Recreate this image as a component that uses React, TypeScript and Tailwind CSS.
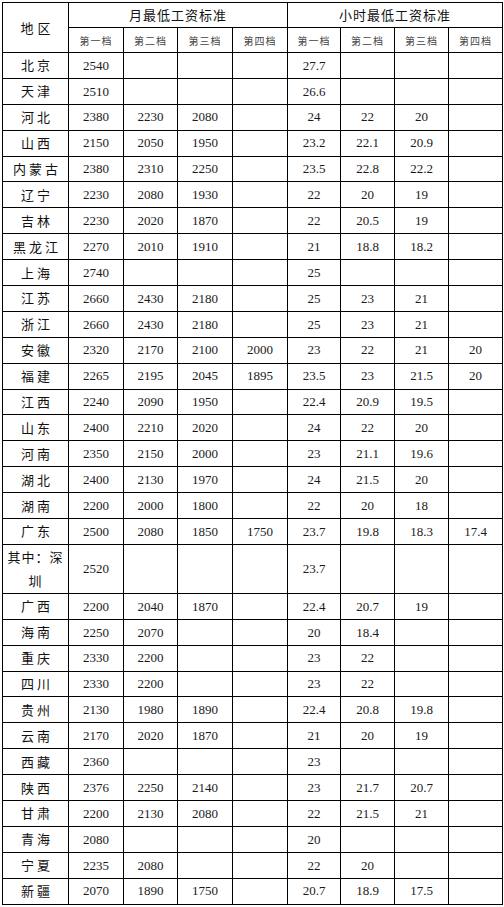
type Row = { name: React.ReactNode; m: string[]; h: string[]; tall?: boolean }

const rows: Row[] = [
  { name: '北京', m: ['2540'], h: ['27.7'] },
  { name: '天津', m: ['2510'], h: ['26.6'] },
  { name: '河北', m: ['2380', '2230', '2080'], h: ['24', '22', '20'] },
  { name: '山西', m: ['2150', '2050', '1950'], h: ['23.2', '22.1', '20.9'] },
  { name: '内蒙古', m: ['2380', '2310', '2250'], h: ['23.5', '22.8', '22.2'] },
  { name: '辽宁', m: ['2230', '2080', '1930'], h: ['22', '20', '19'] },
  { name: '吉林', m: ['2230', '2020', '1870'], h: ['22', '20.5', '19'] },
  { name: '黑龙江', m: ['2270', '2010', '1910'], h: ['21', '18.8', '18.2'] },
  { name: '上海', m: ['2740'], h: ['25'] },
  { name: '江苏', m: ['2660', '2430', '2180'], h: ['25', '23', '21'] },
  { name: '浙江', m: ['2660', '2430', '2180'], h: ['25', '23', '21'] },
  { name: '安徽', m: ['2320', '2170', '2100', '2000'], h: ['23', '22', '21', '20'] },
  { name: '福建', m: ['2265', '2195', '2045', '1895'], h: ['23.5', '23', '21.5', '20'] },
  { name: '江西', m: ['2240', '2090', '1950'], h: ['22.4', '20.9', '19.5'] },
  { name: '山东', m: ['2400', '2210', '2020'], h: ['24', '22', '20'] },
  { name: '河南', m: ['2350', '2150', '2000'], h: ['23', '21.1', '19.6'] },
  { name: '湖北', m: ['2400', '2130', '1970'], h: ['24', '21.5', '20'] },
  { name: '湖南', m: ['2200', '2000', '1800'], h: ['22', '20', '18'] },
  { name: '广东', m: ['2500', '2080', '1850', '1750'], h: ['23.7', '19.8', '18.3', '17.4'] },
  { name: <>其中：深<br />圳</>, m: ['2520'], h: ['23.7'], tall: true },
  { name: '广西', m: ['2200', '2040', '1870'], h: ['22.4', '20.7', '19'] },
  { name: '海南', m: ['2250', '2070'], h: ['20', '18.4'] },
  { name: '重庆', m: ['2330', '2200'], h: ['23', '22'] },
  { name: '四川', m: ['2330', '2200'], h: ['23', '22'] },
  { name: '贵州', m: ['2130', '1980', '1890'], h: ['22.4', '20.8', '19.8'] },
  { name: '云南', m: ['2170', '2020', '1870'], h: ['21', '20', '19'] },
  { name: '西藏', m: ['2360'], h: ['23'] },
  { name: '陕西', m: ['2376', '2250', '2140'], h: ['23', '21.7', '20.7'] },
  { name: '甘肃', m: ['2200', '2130', '2080'], h: ['22', '21.5', '21'] },
  { name: '青海', m: ['2080'], h: ['20'] },
  { name: '宁夏', m: ['2235', '2080'], h: ['22', '20'] },
  { name: '新疆', m: ['2070', '1890', '1750'], h: ['20.7', '18.9', '17.5'] },
]

const tiers = ['第一档', '第二档', '第三档', '第四档']
const widths = ['w-[66px]', 'w-[55px]', 'w-[54px]', 'w-[55px]', 'w-[55px]', 'w-[53px]', 'w-[54px]', 'w-[54px]', 'w-[54px]']

const cell = 'border border-black p-0 text-center align-middle'
const sans = "font-['Noto_Sans_CJK_SC',sans-serif]"
const num = "font-['Liberation_Serif','Noto_Sans_CJK_SC',serif] text-[13px] text-[#1a1a1a]"

export default function App() {
  return (
    <div className="bg-white w-[504px] h-[907px] pt-[2px] pl-[2px]">
      <table className="border-collapse table-fixed w-[500px]">
        <colgroup>
          {widths.map((w, i) => (
            <col key={i} className={w} />
          ))}
        </colgroup>
        <thead>
          <tr className="h-[25px]">
            <th rowSpan={2} className={`${cell} ${sans} text-[13px] font-normal tracking-[4px] pl-[4px] text-[#111]`}>
              地区
            </th>
            <th colSpan={4} className={`${cell} ${sans} text-[13px] font-normal tracking-[1px] text-[#111]`}>
              月最低工资标准
            </th>
            <th colSpan={4} className={`${cell} ${sans} text-[13px] font-normal tracking-[1px] text-[#111]`}>
              小时最低工资标准
            </th>
          </tr>
          <tr className="h-[25px]">
            {[...tiers, ...tiers].map((t, i) => (
              <th key={i} className={`${cell} ${sans} text-[10px] font-normal tracking-[1px] text-[#444]`}>
                {t}
              </th>
            ))}
          </tr>
        </thead>
        <tbody>
          {rows.map((r, i) => (
            <tr key={i} className={r.tall ? 'h-[49px]' : 'h-[25.9px]'}>
              <td
                className={`${cell} ${sans} text-[13px] leading-[24px] text-[#111] ${
                  r.tall ? 'tracking-[1px]' : 'tracking-[3px] pl-[3px]'
                }`}
              >
                {r.name}
              </td>
              {[0, 1, 2, 3].map((k) => (
                <td key={`m${k}`} className={`${cell} ${num}`}>
                  {r.m[k] ?? ''}
                </td>
              ))}
              {[0, 1, 2, 3].map((k) => (
                <td key={`h${k}`} className={`${cell} ${num}`}>
                  {r.h[k] ?? ''}
                </td>
              ))}
            </tr>
          ))}
        </tbody>
      </table>
    </div>
  )
}
